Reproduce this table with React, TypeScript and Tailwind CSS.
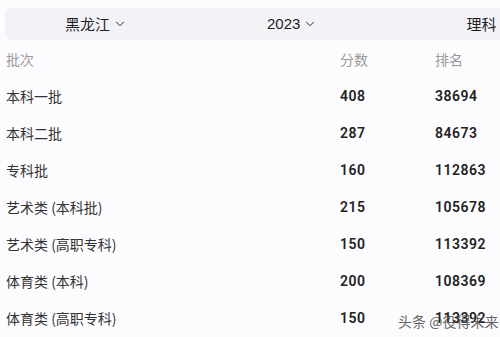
import { ChevronDown } from "lucide-react";

const rows = [
  { name: "本科一批", score: "408", rank: "38694" },
  { name: "本科二批", score: "287", rank: "84673" },
  { name: "专科批", score: "160", rank: "112863" },
  { name: "艺术类 (本科批)", score: "215", rank: "105678" },
  { name: "艺术类 (高职专科)", score: "150", rank: "113392" },
  { name: "体育类 (本科)", score: "200", rank: "108369" },
  { name: "体育类 (高职专科)", score: "150", rank: "113392" },
];

const cjk = { fontFamily: '"Noto Sans CJK SC", "Noto Sans", sans-serif' };
const num = { fontFamily: 'Roboto, "Noto Sans", sans-serif' };

export default function App() {
  return (
    <div
      className="relative w-[500px] h-[337px] overflow-hidden bg-[#fcfcfe] text-[#2a2a2a]"
      style={cjk}
    >
      <div className="ml-[5px] mt-[8px] w-[600px] h-[32px] rounded-lg bg-[#f2f2f7] flex items-center text-[15px] text-[#1f1f1f]">
        <div className="ml-[60px] flex items-center gap-[3px]">
          <span>黑龙江</span>
          <ChevronDown size={14} strokeWidth={1.6} />
        </div>
        <div className="ml-[140px] flex items-center gap-[3px]">
          <span style={{ fontFamily: '"Liberation Sans", sans-serif' }}>2023</span>
          <ChevronDown size={14} strokeWidth={1.6} />
        </div>
        <div className="ml-[149px] flex items-center gap-[3px]">
          <span>理科</span>
          <ChevronDown size={14} strokeWidth={1.6} />
        </div>
      </div>

      <div className="px-[6px] mt-[1px]">
        <div className="grid grid-cols-[334px_95px_1fr] h-[37px] items-center text-[14px] text-[#9a9a9a]">
          <span>批次</span>
          <span>分数</span>
          <span>排名</span>
        </div>
        {rows.map((r, i) => (
          <div
            key={i}
            className="grid grid-cols-[334px_95px_1fr] h-[37px] items-center text-[14px]"
          >
            <span className="text-[#333]">{r.name}</span>
            <span className="font-semibold text-[#222] tracking-[0.5px]" style={num}>
              {r.score}
            </span>
            <span className="font-semibold text-[#222] tracking-[0.5px]" style={num}>
              {r.rank}
            </span>
          </div>
        ))}
      </div>

      <div className="absolute left-[398px] top-[311px] text-[14px] text-[#555] opacity-90">
        头条 @役得未来
      </div>
    </div>
  );
}
